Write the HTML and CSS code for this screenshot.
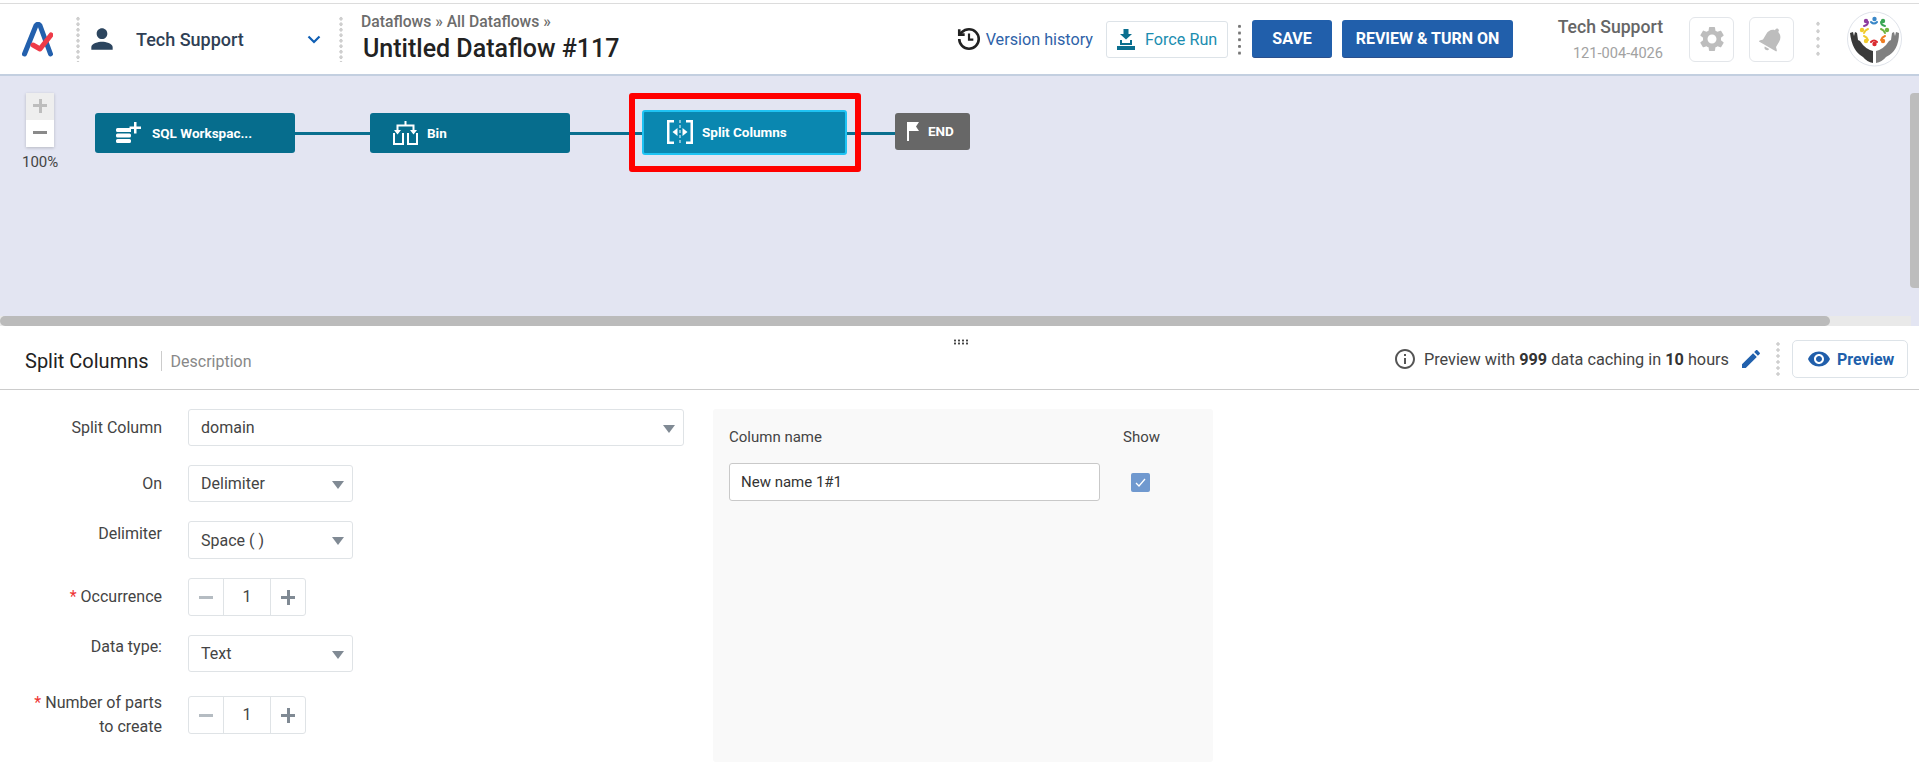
FILE: index.html
```html
<!DOCTYPE html>
<html lang="en">
<head>
  <meta charset="UTF-8">
  <title>Untitled Dataflow #117</title>
  <link rel="stylesheet" href="styles.css">
</head>
<body>
  <header class="topbar">
    <svg class="logo" viewBox="0 0 31 35">
      <path d="M2.500 32 L14 3.500 Q16 1 18 3.500 L28.500 32" fill="none" stroke="#2360ad" stroke-width="5" stroke-linecap="round" stroke-linejoin="round"/>
      <path d="M11 23 L18 27 L29 13" fill="none" stroke="#ee3b48" stroke-width="5" stroke-linecap="round" stroke-linejoin="round"/>
    </svg>
    <span class="dots dots-logo"></span>
    <svg class="user-icon" viewBox="0 0 24 24"><path d="M12 12c2.210 0 4-1.790 4-4s-1.790-4-4-4-4 1.790-4 4 1.790 4 4 4zm0 2c-2.670 0-8 1.340-8 4v2h16v-2c0-2.660-5.330-4-8-4z"/></svg>
    <span class="org-name">Tech Support</span>
    <svg class="chevron" viewBox="0 0 14 9"><path d="M1.500 1.500 L7 7 L12.500 1.500" fill="none" stroke="#0f5fb4" stroke-width="2.200"/></svg>
    <span class="dots dots-org"></span>
    <div class="crumbs">
      <div class="crumb-path">Dataflows » All Dataflows »</div>
      <div class="flow-title">Untitled Dataflow #117</div>
    </div>

    <div class="top-actions">
      <svg class="history-icon" viewBox="0 0 24 24" fill="none" stroke="#222" stroke-width="2.400">
        <path d="M3 12a9 9 0 1 0 9-9 9.750 9.750 0 0 0-6.740 2.740L3 8"/>
        <path d="M3 3v5h5"/>
        <path d="M12 7v5.500h4" stroke-width="2"/>
      </svg>
      <a class="history-link">Version history</a>
      <button class="force-btn">
        <svg viewBox="0 0 18 21"><path d="M6.500 0h5v5h3.500L9 10.500 3 5h3.500zM3 11h2v3h8v-3h2v5H3zM0 17h18v4H0z" fill="#0b6f8f"/></svg>
        Force Run
      </button>
      <span class="dots dots-actions"></span>
      <button class="primary-btn save-btn">SAVE</button>
      <button class="primary-btn review-btn">REVIEW &amp; TURN ON</button>
      <div class="account">
        <div class="account-name">Tech Support</div>
        <div class="account-id">121-004-4026</div>
      </div>
      <button class="icon-btn gear-btn">
        <svg viewBox="0 0 24 24"><path d="M19.140 12.940c.04-.3.06-.61.06-.94 0-.32-.02-.64-.07-.94l2.030-1.580c.18-.14.23-.41.12-.61l-1.920-3.320c-.12-.22-.37-.29-.59-.22l-2.390.96c-.5-.38-1.030-.7-1.620-.94l-.36-2.540c-.04-.24-.24-.41-.48-.41h-3.840c-.24 0-.43.17-.47.41l-.36 2.540c-.59.24-1.130.57-1.620.94l-2.390-.96c-.22-.08-.47 0-.59.22L2.740 8.870c-.12.21-.08.47.12.61l2.030 1.580c-.05.3-.09.63-.09.94s.02.64.07.94l-2.030 1.580c-.18.14-.23.41-.12.61l1.920 3.320c.12.22.37.29.59.22l2.390-.96c.5.38 1.030.7 1.620.94l.36 2.540c.05.24.24.41.48.41h3.840c.24 0 .44-.17.47-.41l.36-2.540c.59-.24 1.130-.56 1.620-.94l2.390.96c.22.08.47 0 .59-.22l1.920-3.320c.12-.22.07-.47-.12-.61l-2.010-1.580zM12 15.600c-1.980 0-3.600-1.620-3.600-3.600s1.620-3.600 3.600-3.600 3.600 1.620 3.600 3.600-1.620 3.600-3.600 3.600z"/></svg>
      </button>
      <button class="icon-btn bell-btn">
        <svg viewBox="0 0 24 24"><path transform="rotate(30 12 12)" d="M12 22c1.100 0 2-.9 2-2h-4c0 1.100.89 2 2 2zm6-6v-5c0-3.070-1.640-5.640-4.500-6.320V4c0-.83-.67-1.500-1.500-1.500s-1.500.67-1.500 1.500v.68C7.630 5.360 6 7.920 6 11v5l-2 2v1h16v-1l-2-2z"/></svg>
      </button>
      <span class="dots dots-user"></span>
      <svg class="avatar" viewBox="0 0 55 56">
        <circle cx="27.500" cy="28" r="27" fill="#fff" stroke="#dfe3ea"/>
        <g fill="none" stroke-width="2" stroke-linecap="round">
          <path d="M24 11q3 3 6 0" stroke="#3a87c8"/>
          <path d="M17 15q4-1 4-4" stroke="#8e3c9e"/>
          <path d="M34 11q0 3 4 4" stroke="#3aa655"/>
          <path d="M21 18q-3 1-4 4" stroke="#f0cb2e"/>
          <path d="M34 18q3 1 4 4" stroke="#6fb43f"/>
          <path d="M17 25q3 1 4 4" stroke="#f0cb2e"/>
          <path d="M38 25q-3 1-4 4" stroke="#ef7d22"/>
          <path d="M24 31q3-3 6 0" stroke="#d9292f"/>
        </g>
        <circle cx="27.500" cy="8" r="2.200" fill="#3a87c8"/>
        <circle cx="19" cy="10" r="2.200" fill="#8e3c9e"/>
        <circle cx="36" cy="10" r="2.200" fill="#3aa655"/>
        <circle cx="15" cy="19" r="2.200" fill="#f0cb2e"/>
        <circle cx="40" cy="19" r="2.200" fill="#6fb43f"/>
        <circle cx="19" cy="30" r="2.200" fill="#f0cb2e"/>
        <circle cx="36" cy="30" r="2.200" fill="#ef7d22"/>
        <circle cx="27.500" cy="33" r="2.200" fill="#d9292f"/>
        <path d="M3 22l3-1 1 4 1-4 2 1 1 7 2 1q5 8 13 10v12q-6-1-10-6Q5 40 3 22z" fill="#3a3a3a"/>
        <path d="M52 22l-3-1-1 4-1-4-2 1-1 7-2 1q-5 8-13 10v12q6-1 10-6 13-6 13-24z" fill="#808080"/>
      </svg>
    </div>
  </header>

  <section class="canvas">
    <div class="zoom-box">
      <div class="zoom-in"></div>
      <div class="zoom-out"></div>
    </div>
    <div class="zoom-level">100%</div>

    <div class="link link-a"></div>
    <div class="link link-b"></div>
    <div class="link link-c"></div>

    <div class="node node-sql">
      <svg viewBox="0 0 25 21"><path d="M0 7.500q0-1.500 1.500-1.500H15v4H1.500Q0 10 0 8.500zM0 13q0-1.500 1.500-1.500h12q1.500 0 1.500 1.500v1q0 1.500-1.500 1.500h-12Q0 15.500 0 14zM0 18.500Q0 17 1.500 17h12q1.500 0 1.500 1.500v1q0 1.500-1.500 1.500h-12Q0 21 0 19.500zM18 0h2.500v4.500H25V7h-4.500v4.500H18V7h-4.500V4.500H18z"/></svg>
      SQL Workspac...
    </div>
    <div class="node node-bin">
      <svg viewBox="0 0 25 24"><path d="M11.500 0h2v3.500h8V9H24l-3.500 4.500L17 9h2.500V5.500h-14V9H8l-3.500 4.500L1 9h2.500V3.500h8zM0 12h2v10h7V12h2v12H0zM14 12h2v10h7V12h2v12H14z"/></svg>
      Bin
    </div>
    <div class="node node-split">
      <svg viewBox="0 0 26 24"><path d="M7 0v2.500H2.500v19H7V24H0V0zM19 0h7v24h-7v-2.500h4.500v-19H19zM12.500 0h1v3h-1zM12.500 5h1v3h-1zM12.500 10h1v3h-1zM12.500 15h1v3h-1zM12.500 20h1v3h-1zM10.500 8v8L5.500 12zM15.500 8v8l5-4z"/></svg>
      Split Columns
    </div>
    <div class="node node-end">
      <svg viewBox="0 0 12 19"><path d="M0 0h12L9 4.500l3 4.500H2v10H0z"/></svg>
      END
    </div>
    <div class="highlight"></div>

    <div class="scroll-v"></div>
    <div class="scroll-h"><div class="scroll-h-thumb"></div></div>
  </section>

  <section class="panel">
    <div class="panel-head">
      <span class="panel-title">Split Columns</span>
      <span class="panel-desc">Description</span>
      <span class="drag-handle"></span>
      <div class="panel-tools">
        <svg class="info-icon" viewBox="0 0 24 24"><path d="M11 7h2v2h-2zm0 4h2v6h-2zm1-9C6.480 2 2 6.480 2 12s4.480 10 10 10 10-4.480 10-10S17.520 2 12 2zm0 18c-4.410 0-8-3.590-8-8s3.590-8 8-8 8 3.590 8 8-3.590 8-8 8z"/></svg>
        <span class="cache-note">Preview with <b>999</b> data caching in <b>10</b> hours</span>
        <svg class="edit-icon" viewBox="0 0 24 24"><path d="M3 17.250V21h3.750L17.810 9.940l-3.750-3.750L3 17.250zM20.710 7.040c.39-.39.39-1.020 0-1.410l-2.340-2.340c-.39-.39-1.020-.39-1.410 0l-1.830 1.830 3.750 3.750 1.830-1.830z"/></svg>
        <span class="dots dots-preview"></span>
        <button class="preview-btn">
          <svg viewBox="0 0 24 24"><path d="M12 4.500C7 4.500 2.730 7.610 1 12c1.730 4.390 6 7.500 11 7.500s9.270-3.110 11-7.500c-1.730-4.390-6-7.500-11-7.500zM12 17c-2.760 0-5-2.240-5-5s2.240-5 5-5 5 2.240 5 5-2.240 5-5 5zm0-8c-1.660 0-3 1.340-3 3s1.340 3 3 3 3-1.340 3-3-1.340-3-3-3z"/></svg>
          Preview
        </button>
      </div>
    </div>

    <div class="panel-body">
      <form class="form">
        <div class="row">
          <label class="field-label">Split Column</label>
          <div class="select select-wide">domain</div>
        </div>
        <div class="row">
          <label class="field-label">On</label>
          <div class="select">Delimiter</div>
        </div>
        <div class="row">
          <label class="field-label label-up">Delimiter</label>
          <div class="select select-tall">Space ( )</div>
        </div>
        <div class="row">
          <label class="field-label"><i>*</i> Occurrence</label>
          <div class="stepper"><span class="step-minus"></span><span class="step-value">1</span><span class="step-plus"></span></div>
        </div>
        <div class="row">
          <label class="field-label label-up">Data type:</label>
          <div class="select">Text</div>
        </div>
        <div class="row">
          <label class="field-label"><i>*</i> Number of parts<br>to create</label>
          <div class="stepper"><span class="step-minus"></span><span class="step-value">1</span><span class="step-plus"></span></div>
        </div>
      </form>

      <div class="columns-card">
        <div class="columns-head">
          <span>Column name</span>
          <span>Show</span>
        </div>
        <div class="columns-row">
          <div class="name-input">New name 1#1</div>
          <span class="checkbox">
            <svg viewBox="0 0 19 19"><path d="M5 10l3 3 6-7" fill="none" stroke="#fff" stroke-width="1.300"/></svg>
          </span>
        </div>
      </div>
    </div>
  </section>
</body>
</html>
```

FILE: styles.css
```css
* {
  box-sizing: border-box;
}

html, body {
  margin: 0;
  height: 762px;
  overflow: hidden;
}

body {
  background-color: #fff;
  color: #333;
  font-family: Roboto, "Liberation Sans", sans-serif;
  font-size: 15px;
  padding-top: 3px;
}

button {
  font-family: inherit;
  cursor: pointer;
}

.dots {
  display: block;
  width: 4px;
  flex: none;
  background: radial-gradient(circle, #cfcfcf 1.500px, transparent 1.800px) 0 0 / 4px 5.500px;
}

/* Top bar */
.topbar {
  display: flex;
  align-items: center;
  height: 73px;
  padding: 0 17px 0 22px;
  border-top: 1px solid #dcdcdc;
  border-bottom: 2px solid #c3cfe0;
}

.logo {
  width: 31px;
  height: 35px;
  flex: none;
}

.dots-logo {
  height: 46px;
  margin-left: 23px;
}

.user-icon {
  width: 32px;
  height: 32px;
  fill: #2c455f;
  margin-left: 6px;
  flex: none;
}

.org-name {
  margin-left: 18px;
  width: 171px;
  font-size: 18px;
  font-weight: 500;
  color: #2f3f55;
}

.chevron {
  width: 14px;
  height: 9px;
  flex: none;
}

.dots-org {
  height: 46px;
  margin-left: 18px;
}

.crumbs {
  margin-left: 18px;
  padding-bottom: 1px;
}

.crumb-path {
  font-size: 15.700px;
  font-weight: 500;
  color: #6c6c6c;
  line-height: 18px;
}

.flow-title {
  font-size: 25px;
  font-weight: 500;
  color: #222;
  line-height: 30px;
  margin: 3px 0 0 2px;
}

.top-actions {
  display: flex;
  align-items: center;
  margin-left: auto;
}

.history-icon {
  width: 26px;
  height: 26px;
  flex: none;
}

.history-link {
  margin-left: 4px;
  font-size: 16.200px;
  color: #2e62a8;
}

.force-btn {
  display: flex;
  align-items: center;
  gap: 10px;
  margin-left: 13px;
  width: 122px;
  height: 37px;
  padding: 0 0 0 10px;
  background: #fff;
  border: 1px solid #dde3e8;
  border-radius: 3px;
  font-size: 16.200px;
  color: #1b8db0;
}

.force-btn svg {
  width: 18px;
  height: 21px;
}

.dots-actions {
  width: 3px;
  height: 33px;
  margin-left: 10px;
  background: radial-gradient(circle, #777 1.300px, transparent 1.600px) 0 0 / 3px 6.700px;
}

.primary-btn {
  height: 38px;
  padding: 0;
  background: #215fab;
  border: none;
  border-bottom: 1px solid #2a4f8c;
  border-radius: 3px;
  color: #fff;
  font-size: 16px;
  font-weight: 700;
}

.save-btn {
  width: 80px;
  margin-left: 11px;
}

.review-btn {
  width: 171px;
  margin-left: 10px;
}

.account {
  width: 150px;
  text-align: right;
}

.account-name {
  font-size: 17.600px;
  font-weight: 500;
  color: #666;
  line-height: 22px;
}

.account-id {
  font-size: 14.600px;
  color: #a2a2a2;
  line-height: 18px;
  margin-top: 6px;
}

.icon-btn {
  display: flex;
  align-items: center;
  justify-content: center;
  width: 45px;
  height: 45px;
  padding: 0;
  background: #fff;
  border: 1px solid #e3e6ea;
  border-radius: 6px;
}

.icon-btn svg {
  width: 30px;
  height: 30px;
  fill: #bdbdbd;
}

.gear-btn {
  margin-left: 26px;
}

.bell-btn {
  margin-left: 15px;
}

.dots-user {
  height: 38px;
  margin-left: 22px;
  background-size: 4px 7.500px;
}

.avatar {
  width: 55px;
  height: 56px;
  margin-left: 27px;
  flex: none;
}

/* Canvas */
.canvas {
  position: relative;
  height: 250px;
  background-color: #e3e5f2;
}

.zoom-box {
  position: absolute;
  left: 26px;
  top: 17px;
  width: 28px;
  height: 54px;
  background: #fff;
  box-shadow: 0 1px 3px rgba(0,0,0,0.2);
}

.zoom-in {
  position: relative;
  height: 27px;
  background: #eee;
}

.zoom-out {
  position: relative;
  height: 27px;
}

.zoom-in::before, .zoom-in::after, .zoom-out::before {
  content: "";
  position: absolute;
  left: 7px;
  top: 11px;
  width: 14px;
  height: 3px;
  background: #bdbdbd;
}

.zoom-in::after {
  left: 12.500px;
  top: 6px;
  width: 3px;
  height: 14px;
}

.zoom-out::before {
  background: #8a8a8a;
}

.zoom-level {
  position: absolute;
  left: 22px;
  top: 77px;
  font-size: 15px;
  color: #444;
}

.link {
  position: absolute;
  top: 56px;
  height: 3px;
  background: #0a6f8f;
}

.link-a { left: 295px; width: 75px; }
.link-b { left: 570px; width: 72px; }
.link-c { left: 847px; width: 48px; }

.node {
  position: absolute;
  top: 37px;
  height: 40px;
  display: flex;
  align-items: center;
  padding-bottom: 1px;
  background: #066d8d;
  border-radius: 3px;
  color: #fff;
  font-size: 13.500px;
  font-weight: 700;
}

.node svg {
  fill: #fff;
  flex: none;
}

.node-sql {
  left: 95px;
  width: 200px;
  padding-left: 21px;
  gap: 11px;
}

.node-sql svg { width: 25px; height: 21px; }

.node-bin {
  left: 370px;
  width: 200px;
  padding-left: 23px;
  gap: 9px;
}

.node-bin svg { width: 25px; height: 24px; }

.node-split {
  left: 642px;
  top: 34px;
  width: 205px;
  height: 45px;
  padding-left: 23px;
  gap: 9px;
  background: #0a87b0;
  border: 2px solid #1fc3f3;
}

.node-split svg { width: 26px; height: 24px; }

.node-end {
  left: 895px;
  width: 75px;
  height: 37px;
  padding-left: 12px;
  gap: 9px;
  background: #676767;
}

.node-end svg { width: 12px; height: 19px; }

.highlight {
  position: absolute;
  left: 629px;
  top: 17px;
  width: 232px;
  height: 79px;
  border: 6px solid #f00;
  border-radius: 3px;
}

.scroll-v {
  position: absolute;
  right: 0;
  top: 17px;
  width: 9px;
  height: 195px;
  background: #bdbdbd;
  border-radius: 4px 0 0 4px;
}

.scroll-h {
  position: absolute;
  left: 0;
  right: 8px;
  bottom: 0;
  height: 10px;
  background: #e9e9e9;
}

.scroll-h-thumb {
  width: 1830px;
  height: 10px;
  background: #bbb;
  border-radius: 5px;
}

/* Settings panel */
.panel-head {
  position: relative;
  display: flex;
  align-items: center;
  height: 64px;
  padding: 7px 11px 0 25px;
  border-bottom: 1px solid #ccc;
}

.panel-title {
  font-size: 20px;
  color: #222;
  padding-right: 12px;
  border-right: 1px solid #ccc;
  line-height: 20px;
}

.panel-desc {
  margin-left: 9px;
  font-size: 16px;
  color: #888;
}

.drag-handle {
  position: absolute;
  left: 953px;
  top: 13px;
  width: 15px;
  height: 6px;
  background: radial-gradient(circle, #444 1px, transparent 1.200px) 0 0 / 4px 3px;
}

.panel-tools {
  display: flex;
  align-items: center;
  margin: 0 0 4px auto;
}

.info-icon {
  width: 24px;
  height: 24px;
  fill: #555;
}

.cache-note {
  margin-left: 7px;
  font-size: 16.250px;
  color: #444;
}

.cache-note b {
  font-weight: 700;
  color: #333;
}

.edit-icon {
  width: 24px;
  height: 24px;
  fill: #2161ad;
  margin-left: 10px;
}

.dots-preview {
  height: 36px;
  margin-left: 13px;
  background-size: 4px 6px;
}

.preview-btn {
  display: flex;
  align-items: center;
  gap: 6px;
  width: 116px;
  height: 38px;
  margin-left: 12px;
  padding: 0 0 0 14px;
  background: #fff;
  border: 1px solid #dde3e8;
  border-radius: 5px;
  font-size: 16px;
  font-weight: 700;
  color: #215fab;
}

.preview-btn svg {
  width: 24px;
  height: 24px;
  fill: #215fab;
}

.panel-body {
  display: flex;
  align-items: flex-start;
  padding-top: 19px;
}

.form {
  display: flex;
  flex-direction: column;
  gap: 19px;
  width: 713px;
  flex: none;
  font-size: 16px;
}

.row {
  display: flex;
  align-items: center;
}

.field-label {
  width: 162px;
  flex: none;
  text-align: right;
  line-height: 24px;
  color: #444;
}

.field-label i {
  color: #e33;
  font-style: normal;
}

.label-up {
  margin-bottom: 13px;
}

.select {
  position: relative;
  display: flex;
  align-items: center;
  width: 165px;
  height: 37px;
  margin-left: 26px;
  padding-left: 12px;
  background: #fff;
  border: 1px solid #dfe3e6;
  border-radius: 3px;
  color: #444;
}

.select::after {
  content: "";
  position: absolute;
  right: 8px;
  top: 15px;
  border-left: 6px solid transparent;
  border-right: 6px solid transparent;
  border-top: 8px solid #808a94;
}

.select-wide {
  width: 496px;
}

.select-tall {
  height: 38px;
}

.stepper {
  display: flex;
  width: 118px;
  height: 38px;
  margin-left: 26px;
  background: #fff;
  border: 1px solid #dfe3e6;
  border-radius: 3px;
}

.step-minus, .step-plus {
  position: relative;
  width: 34px;
  flex: none;
}

.step-minus::before, .step-plus::before, .step-plus::after {
  content: "";
  position: absolute;
  left: 10px;
  top: 17px;
  width: 14px;
  height: 3px;
  background: #b5bcc2;
}

.step-plus::before, .step-plus::after {
  background: #808a94;
}

.step-plus::after {
  left: 15.500px;
  top: 11px;
  width: 3px;
  height: 15px;
}

.step-value {
  width: 48px;
  flex: none;
  text-align: center;
  line-height: 36px;
  border-left: 1px solid #dfe3e6;
  border-right: 1px solid #dfe3e6;
  color: #444;
}

.columns-card {
  width: 500px;
  height: 353px;
  padding: 17px 16px 16px;
  background: #f9f9f9;
  border-radius: 3px;
}

.columns-head {
  display: flex;
  justify-content: space-between;
  padding-right: 37px;
  line-height: 22px;
  color: #444;
}

.columns-row {
  display: flex;
  align-items: center;
  margin-top: 15px;
}

.name-input {
  width: 371px;
  height: 38px;
  padding-left: 11px;
  background: #fff;
  border: 1px solid #c9c9c9;
  border-radius: 3px;
  line-height: 36px;
  color: #333;
}

.checkbox {
  display: block;
  width: 19px;
  height: 19px;
  margin-left: 31px;
  background: #7099cf;
  border-radius: 2px;
}

.checkbox svg {
  display: block;
}
```
